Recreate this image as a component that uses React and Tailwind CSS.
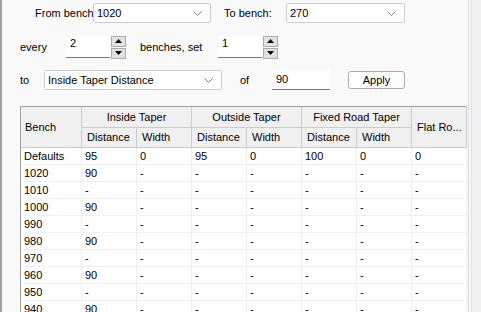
import React from "react";

const Chevron = () => (
  <svg width="9" height="5" viewBox="0 0 9 5" className="shrink-0">
    <path d="M0.5 0.5 L4.5 4.5 L8.5 0.5" fill="none" stroke="#707070" strokeWidth="0.9" />
  </svg>
);

function Dropdown({ value, w }) {
  return (
    <div className={`${w} h-[20px] bg-white border border-[#cccccc] rounded-[2px] flex items-center justify-between pl-[3px] pr-[8px]`}>
      <span className="whitespace-nowrap">{value}</span>
      <Chevron />
    </div>
  );
}

function Spin({ value }) {
  return (
    <div className="flex items-start">
      <div className="w-[44px] h-[22px] bg-white border-b border-[#7a7a7a] pl-[4px] pt-[2px]">{value}</div>
      <div className="ml-[1px] flex flex-col gap-[1px]">
        <div className="w-[15px] h-[11px] bg-[#e1e1e1] border border-[#adadad] flex items-center justify-center">
          <svg width="7" height="4" viewBox="0 0 7 4"><path d="M3.5 0 L7 4 L0 4 Z" fill="#000" /></svg>
        </div>
        <div className="w-[15px] h-[11px] bg-[#e1e1e1] border border-[#adadad] flex items-center justify-center">
          <svg width="7" height="4" viewBox="0 0 7 4"><path d="M0 0 L7 0 L3.5 4 Z" fill="#000" /></svg>
        </div>
      </div>
    </div>
  );
}

const rows = [
  ["Defaults", "95", "0", "95", "0", "100", "0", "0"],
  ["1020", "90", "-", "-", "-", "-", "-", "-"],
  ["1010", "-", "-", "-", "-", "-", "-", "-"],
  ["1000", "90", "-", "-", "-", "-", "-", "-"],
  ["990", "-", "-", "-", "-", "-", "-", "-"],
  ["980", "90", "-", "-", "-", "-", "-", "-"],
  ["970", "-", "-", "-", "-", "-", "-", "-"],
  ["960", "90", "-", "-", "-", "-", "-", "-"],
  ["950", "-", "-", "-", "-", "-", "-", "-"],
  ["940", "90", "-", "-", "-", "-", "-", "-"],
];

const hb = "bg-[#f0f0f0] border-r border-b border-[#c5cdd8] flex items-center whitespace-nowrap";

export default function App() {
  return (
    <div
      className="w-[481px] h-[312px] overflow-hidden flex text-[11px] text-black leading-none"
      style={{ fontFamily: '"Liberation Sans", Arial, sans-serif' }}
    >
      <div className="w-[468px] h-full shrink-0 bg-[#f9f9f9] border-l-2 border-[#a0a0a0] flex flex-col">
        <div className="flex items-center h-[20px] mt-[3px] pl-[33px]">
          <span className="w-[58px] shrink-0 whitespace-nowrap">From bench</span>
          <Dropdown value="1020" w="w-[118px]" />
          <span className="ml-[13px] w-[62px] shrink-0 whitespace-nowrap">To bench:</span>
          <Dropdown value="270" w="w-[119px]" />
        </div>
        <div className="flex items-center h-[22px] mt-[13px] pl-[18px]">
          <span className="w-[46px] shrink-0">every</span>
          <Spin value="2" />
          <span className="ml-[14px] w-[78px] shrink-0 whitespace-nowrap">benches, set</span>
          <Spin value="1" />
        </div>
        <div className="flex items-center h-[20px] mt-[12px] pl-[18px]">
          <span className="w-[24px] shrink-0">to</span>
          <Dropdown value="Inside Taper Distance" w="w-[178px]" />
          <span className="ml-[18px] w-[32px] shrink-0">of</span>
          <div className="w-[58px] h-[20px] bg-white border-b border-[#7a7a7a] pl-[4px] flex items-center">90</div>
          <div className="ml-[18px] w-[57px] h-[18px] bg-[#fdfdfd] border border-[#adadad] rounded-[3px] flex items-center justify-center">Apply</div>
        </div>
        <div className="mt-[16px] ml-[18px] w-[446px] bg-white border-t border-l border-[#a0a0a0]">
          <div className="grid grid-cols-[61px_repeat(7,55px)] grid-rows-[21px_20px]">
            <div className={`${hb} row-span-2 pl-[4px]`}>Bench</div>
            <div className={`${hb} col-span-2 justify-center`}>Inside Taper</div>
            <div className={`${hb} col-span-2 justify-center`}>Outside Taper</div>
            <div className={`${hb} col-span-2 justify-center`}>Fixed Road Taper</div>
            <div className={`${hb} row-span-2 pl-[5px]`}>Flat Ro...</div>
            {["Distance", "Width", "Distance", "Width", "Distance", "Width"].map((t, i) => (
              <div key={i} className={`${hb} pl-[5px]`}>{t}</div>
            ))}
          </div>
          {rows.map((r, i) => (
            <div key={i} className="grid grid-cols-[61px_repeat(7,55px)] h-[17px]">
              {r.map((c, j) => (
                <div key={j} className="border-r border-b border-[#f0f0f0] flex items-center pl-[3px]">{c}</div>
              ))}
            </div>
          ))}
        </div>
      </div>
      <div className="w-[1px] h-full bg-[#d8d8d8]" />
      <div className="w-[2px] h-full bg-[#f8f8f8]" />
      <div className="w-[1px] h-full bg-[#e0e0e0]" />
      <div className="flex-1 h-full bg-[#f0f0f0]" />
    </div>
  );
}
